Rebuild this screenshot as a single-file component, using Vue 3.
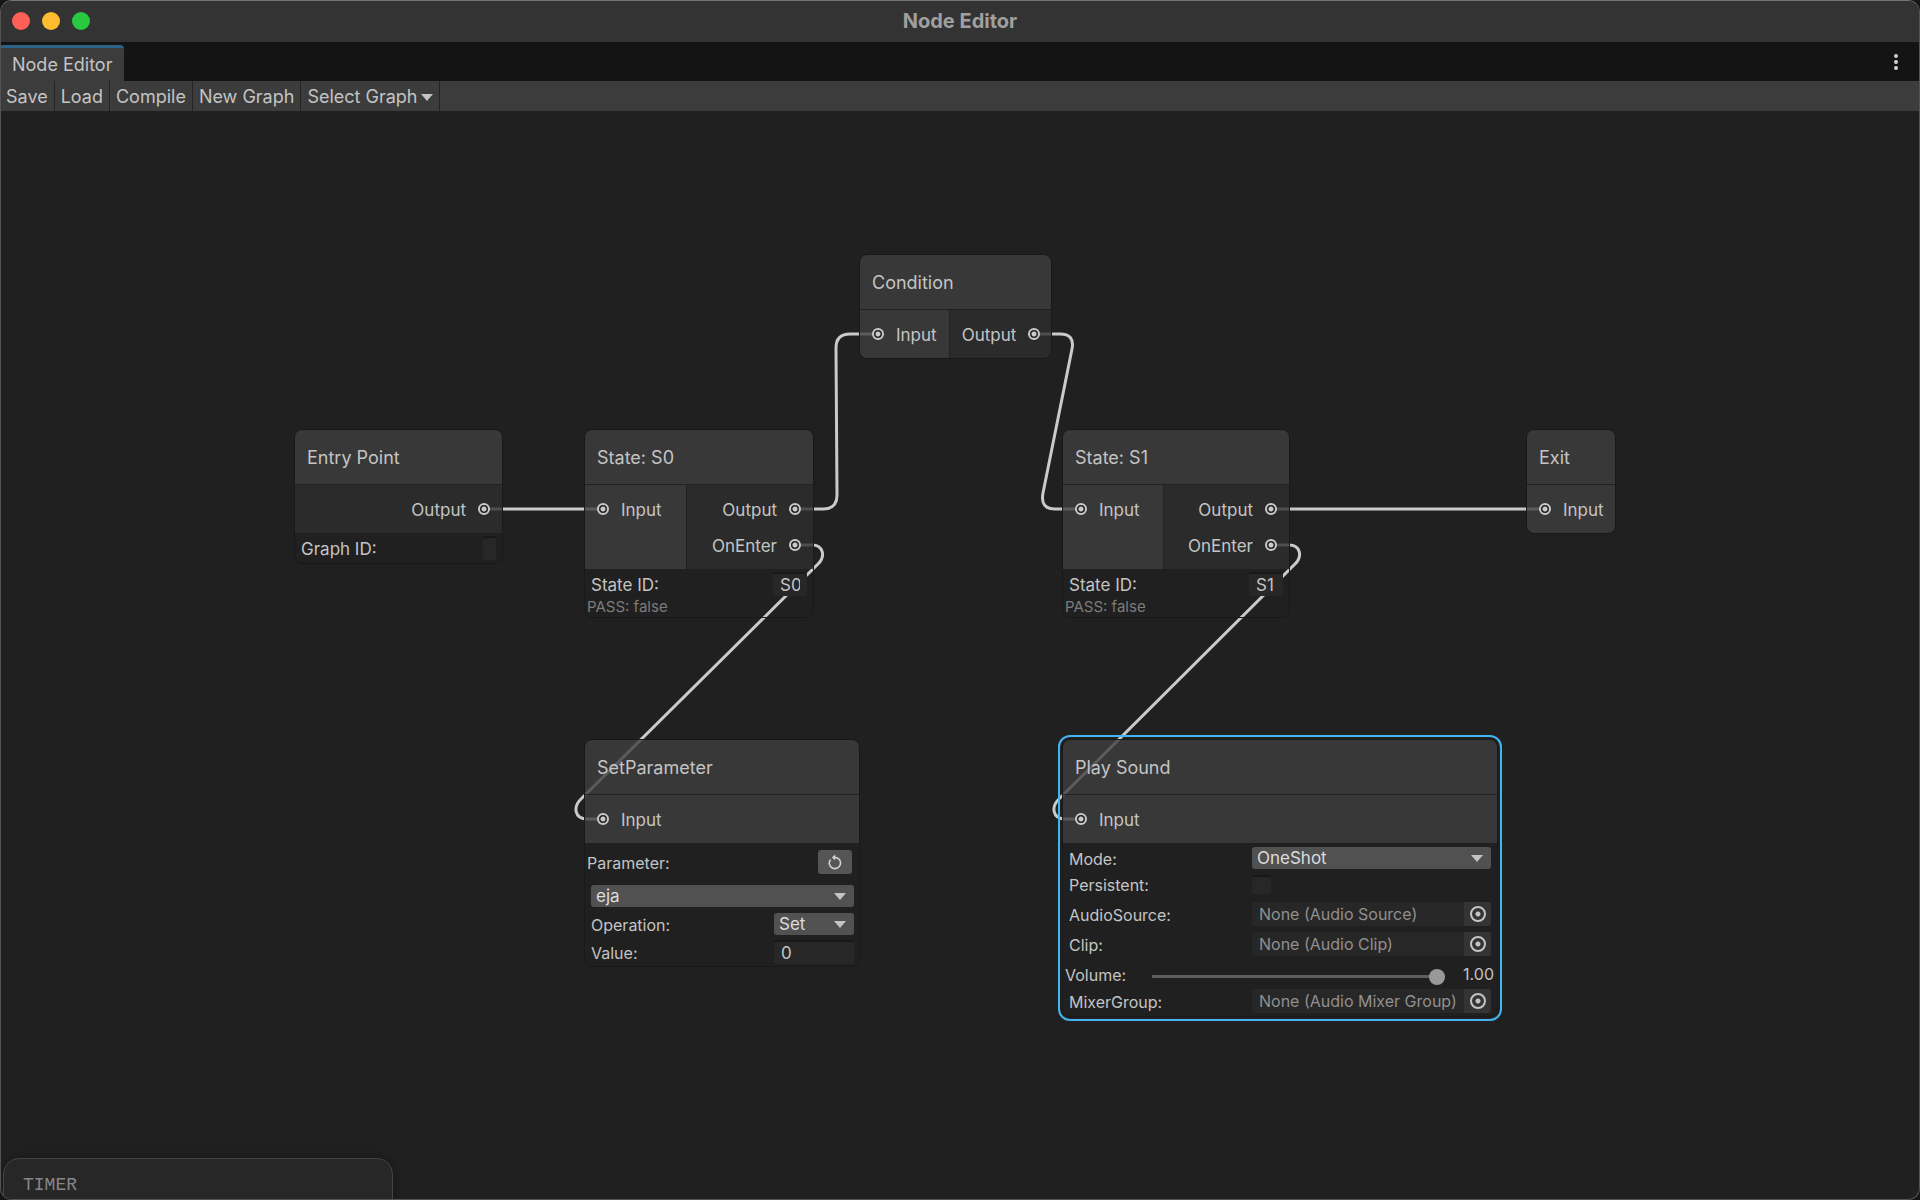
<script setup>
import { ref } from 'vue'

const nodes = [
  { id: 'entry', title: 'Entry Point', x: 294, y: 318, w: 209, inputs: [], outputs: ['Output'] },
  { id: 's0', title: 'State: S0', x: 584, y: 318, w: 230, inputs: ['Input'], outputs: ['Output', 'OnEnter'], state: 'S0' },
  { id: 'condition', title: 'Condition', x: 859, y: 143, w: 193, inputs: ['Input'], outputs: ['Output'] },
  { id: 's1', title: 'State: S1', x: 1062, y: 318, w: 228, inputs: ['Input'], outputs: ['Output', 'OnEnter'], state: 'S1' },
  { id: 'exit', title: 'Exit', x: 1526, y: 318, w: 90, inputs: ['Input'], outputs: [] },
  { id: 'param', title: 'SetParameter', x: 584, y: 628, w: 276, inputs: ['Input'], outputs: [] },
  { id: 'sound', title: 'Play Sound', x: 1062, y: 628, w: 436, inputs: ['Input'], outputs: [], selected: true },
]

const edges = [
  'M485 398H603',
  'M795 398H823Q837 398 837 384L836 237Q836 223 850 223H878',
  'M1033 223H1060Q1075 223 1072 238L1043 382Q1040 398 1055 398H1081',
  'M1271 398H1545',
  'M795 434H812C823 434 826 445 818 453L582 687C572 696 575 708 587 708H603',
  'M1271 434H1289C1300 434 1303 445 1295 453L1060 687C1050 696 1053 708 1065 708H1081',
]

const volume = ref(1)
</script>

<template>
  <div class="window">
    <header class="titlebar">
      <div class="lights">
        <button class="light close" aria-label="Close"></button>
        <button class="light minimize" aria-label="Minimize"></button>
        <button class="light maximize" aria-label="Maximize"></button>
      </div>
      <h1>Node Editor</h1>
    </header>

    <nav class="tabs">
      <button class="tab">Node Editor</button>
      <button class="more" aria-label="More options">
        <svg width="6" height="16" viewBox="0 0 6 16" fill="#d2d2d2">
          <circle cx="3" cy="2" r="2" /><circle cx="3" cy="8" r="2" /><circle cx="3" cy="14" r="2" />
        </svg>
      </button>
    </nav>

    <div class="toolbar">
      <button>Save</button>
      <button>Load</button>
      <button>Compile</button>
      <button>New Graph</button>
      <button>Select Graph<span class="caret"></span></button>
    </div>

    <main class="canvas">
      <svg class="edges" fill="none" stroke="#cacaca" stroke-width="3">
        <path v-for="d in edges" :key="d" :d="d" />
      </svg>

      <section
        v-for="node in nodes"
        :key="node.id"
        class="node"
        :class="{ selected: node.selected }"
        :style="{ left: node.x + 'px', top: node.y + 'px', width: node.w + 'px' }"
      >
        <h2>{{ node.title }}</h2>
        <div class="ports">
          <div v-if="node.inputs.length" class="inputs">
            <div v-for="name in node.inputs" :key="name" class="port">
              <span class="dot"></span><span class="name">{{ name }}</span>
            </div>
          </div>
          <div v-if="node.outputs.length" class="outputs">
            <div v-for="name in node.outputs" :key="name" class="port">
              <span class="name">{{ name }}</span><span class="dot"></span>
            </div>
          </div>
        </div>

        <div v-if="node.id === 'entry'" class="body">
          <div class="row">
            <label for="graph-id">Graph ID:</label>
            <input id="graph-id" class="field empty" type="text" />
          </div>
        </div>

        <div v-if="node.state" class="body state">
          <div class="row">
            <label :for="node.id + '-id'">State ID:</label>
            <input :id="node.id + '-id'" class="field short" type="text" :value="node.state" />
          </div>
          <p class="status">PASS: false</p>
        </div>

        <div v-if="node.id === 'param'" class="body param">
          <div class="row">
            <span class="outdent">Parameter:</span>
            <button class="refresh" aria-label="Refresh parameters">
              <svg width="16" height="16" viewBox="0 0 16 16" fill="none" stroke="#d2d2d2" stroke-width="1.6">
                <path d="M3.6 5.4A5.6 5.6 0 1 0 8 3.4H6.5" />
                <path d="M8.2 0.6V6.2L4.8 3.4Z" fill="#d2d2d2" stroke="none" />
              </svg>
            </button>
          </div>
          <div class="row">
            <div class="dropdown full">
              <select aria-label="Parameter"><option>eja</option></select>
              <span class="caret"></span>
            </div>
          </div>
          <div class="row">
            <label for="operation">Operation:</label>
            <div class="dropdown small">
              <select id="operation"><option>Set</option></select>
              <span class="caret"></span>
            </div>
          </div>
          <div class="row">
            <label for="value">Value:</label>
            <input id="value" class="field value" type="text" value="0" />
          </div>
        </div>

        <div v-if="node.id === 'sound'" class="body sound">
          <div class="row">
            <label for="mode">Mode:</label>
            <div class="dropdown wide">
              <select id="mode"><option>OneShot</option></select>
              <span class="caret"></span>
            </div>
          </div>
          <div class="row tight">
            <label for="persistent">Persistent:</label>
            <div class="wide"><input id="persistent" class="check" type="checkbox" /></div>
          </div>
          <div class="row">
            <label for="source">AudioSource:</label>
            <div class="object wide">
              <input id="source" type="text" readonly value="None (Audio Source)" />
              <button aria-label="Pick audio source"><span class="target"></span></button>
            </div>
          </div>
          <div class="row">
            <label for="clip">Clip:</label>
            <div class="object wide">
              <input id="clip" type="text" readonly value="None (Audio Clip)" />
              <button aria-label="Pick audio clip"><span class="target"></span></button>
            </div>
          </div>
          <div class="row volume">
            <label for="volume">Volume:</label>
            <input id="volume" v-model.number="volume" type="range" min="0" max="1" step="0.01" />
            <output for="volume">{{ volume.toFixed(2) }}</output>
          </div>
          <div class="row tight">
            <label for="mixer">MixerGroup:</label>
            <div class="object wide">
              <input id="mixer" type="text" readonly value="None (Audio Mixer Group)" />
              <button aria-label="Pick mixer group"><span class="target"></span></button>
            </div>
          </div>
        </div>
      </section>

      <aside class="timer">TIMER</aside>
    </main>
  </div>
</template>

<style>
body {
  margin: 0;
  background: #161616;
}
</style>

<style scoped>
* {
  box-sizing: border-box;
}
.window {
  display: flex;
  flex-direction: column;
  height: 100vh;
  border: 1px solid #545454;
  border-top-color: #737373;
  border-radius: 12px;
  overflow: hidden;
  background: #202020;
  color: #c4c4c4;
  font: 17px/24px Inter, "Liberation Sans", sans-serif;
}
button,
input,
select {
  margin: 0;
  padding: 0;
  border: 0;
  background: none;
  color: inherit;
  font: inherit;
}
.titlebar {
  display: grid;
  grid-template-columns: 1fr auto 1fr;
  align-items: center;
  height: 41px;
  padding: 0 11px 2px;
  background: #333;
}
.titlebar h1 {
  margin: 0;
  color: #a0a0a0;
  font-size: 20px;
  font-weight: 700;
}
.lights {
  display: flex;
  gap: 12px;
}
.light {
  width: 18px;
  height: 18px;
  border-radius: 50%;
}
.close { background: #ff5f57; }
.minimize { background: #febc2e; }
.maximize { background: #28c840; }
.tabs {
  display: flex;
  justify-content: space-between;
  align-items: flex-end;
  height: 39px;
  background: #141414;
}
.tab {
  height: 36px;
  padding: 0 12px 0 11px;
  border-top: 3px solid #2c6288;
  border-radius: 0 4px 0 0;
  background: #3c3c3c;
  font-size: 18px;
}
.more {
  display: flex;
  align-items: center;
  height: 39px;
  padding: 0 20px;
}
.toolbar {
  display: flex;
  height: 30px;
  background: #3c3c3c;
}
.toolbar button {
  display: flex;
  align-items: center;
  gap: 3px;
  padding: 2px 6px 0;
  border-right: 1px solid #232323;
  font-size: 18px;
}
.toolbar button:first-child {
  padding-left: 5px;
}
.caret {
  border: 6px solid transparent;
  border-top: 7px solid #c4c4c4;
  border-bottom: 0;
}
.canvas {
  position: relative;
  flex: 1;
  margin-left: -1px;
  overflow: hidden;
}
.edges {
  position: absolute;
  inset: 0;
  width: 100%;
  height: 100%;
}
.node {
  position: absolute;
  border: 1px solid #191919;
  border-radius: 8px;
}
.selected {
  outline: 2px solid #44b4f0;
  outline-offset: 2px;
}
.node h2 {
  height: 54px;
  margin: 0;
  padding: 1px 12px 0;
  border-radius: 7px 7px 0 0;
  background: rgba(63, 63, 63, 0.8);
  font-size: 18px;
  font-weight: 400;
  line-height: 54px;
}
.ports {
  display: flex;
  border-top: 1px solid #222;
  overflow: hidden;
}
.ports:last-child {
  border-radius: 0 0 7px 7px;
}
.inputs,
.outputs {
  flex: 1 1 auto;
  padding: 6px 12px;
}
.inputs {
  background: rgba(63, 63, 63, 0.8);
}
.outputs {
  background: rgba(46, 46, 46, 0.8);
}
.inputs + .outputs {
  border-left: 1px solid #222;
}
.port {
  display: flex;
  align-items: center;
  gap: 12px;
  height: 36px;
}
.name,
.row label,
.outdent {
  padding-top: 2px;
}
.outputs .port {
  justify-content: flex-end;
}
.dot {
  width: 12px;
  height: 12px;
  border: 2px solid #cacaca;
  border-radius: 50%;
  background: radial-gradient(circle, #cacaca 2px, #202020 3px);
}
.body {
  padding: 3px 6px;
}
.row {
  display: flex;
  align-items: center;
  justify-content: space-between;
  height: 24px;
}
.state {
  padding-bottom: 0;
}
.status {
  margin: 0 -4px;
  color: #7c7c7c;
  font-size: 15px;
  line-height: 21px;
}
.field {
  height: 24px;
  padding: 0 7px;
  border-top: 2px solid #181818;
  border-radius: 3px;
  background: #272727;
}
.field.empty { width: 13px; padding: 0; }
.field.short { width: 34px; }
.field.value { width: 80px; }
.param {
  padding: 7px 5px 2px 6px;
}
.param .row + .row {
  margin-top: 4px;
}
.param .row:nth-child(2) {
  margin-top: 10px;
}
.outdent {
  margin-left: -4px;
}
.refresh {
  display: flex;
  align-items: center;
  justify-content: center;
  width: 34px;
  height: 24px;
  margin-right: 2px;
  border-radius: 3px;
  background: #555;
}
.dropdown {
  display: grid;
  align-items: center;
  height: 22px;
}
.dropdown > * {
  grid-area: 1 / 1;
}
.dropdown select {
  width: 100%;
  height: 22px;
  padding-left: 5px;
  border-radius: 3px;
  background: #515151;
  color: #dcdcdc;
  line-height: 22px;
  appearance: none;
}
.dropdown .caret {
  justify-self: end;
  margin-right: 8px;
  pointer-events: none;
}
.full { width: 100%; }
.small { width: 80px; }
.wide { width: 239px; }
.param,
.sound {
  font-size: 16px;
}
.dropdown,
.field {
  font-size: 17px;
}
.sound .row + .row {
  margin-top: 6px;
}
.sound .row + .row.tight {
  margin-top: 2px;
}
.sound .volume + .row.tight {
  margin-top: 3px;
}
.check {
  display: block;
  width: 19px;
  height: 19px;
  border-top: 2px solid #181818;
  border-radius: 3px;
  background: #272727;
  appearance: none;
}
.object {
  display: flex;
  height: 24px;
  border-radius: 3px;
  background: #272727;
  overflow: hidden;
}
.object input {
  flex: 1;
  min-width: 0;
  padding-left: 7px;
  color: #909090;
}
.object button {
  display: flex;
  align-items: center;
  justify-content: center;
  width: 27px;
  background: #343434;
}
.target {
  width: 16px;
  height: 16px;
  border: 2px solid #c4c4c4;
  border-radius: 50%;
  background: radial-gradient(circle, #c4c4c4 2px, transparent 3px);
}
.volume {
  margin-left: -4px;
  margin-right: -3px;
}
.volume label {
  width: 87px;
}
.volume input {
  flex: 1;
  height: 16px;
  margin: 4px 18px 0 0;
  appearance: none;
}
.volume input::-webkit-slider-runnable-track {
  height: 3px;
  background: #5e5e5e;
}
.volume input::-webkit-slider-thumb {
  width: 16px;
  height: 16px;
  margin-top: -6px;
  border-radius: 50%;
  background: #999;
  appearance: none;
}
.timer {
  position: absolute;
  left: 3px;
  bottom: -20px;
  width: 390px;
  height: 61px;
  padding: 14px 19px;
  border: 1px solid #444;
  border-radius: 16px;
  background: #272727;
  box-shadow: 0 0 12px rgba(0, 0, 0, 0.3);
  color: #868686;
  font-family: "Liberation Mono", monospace;
  font-size: 18px;
}
</style>
